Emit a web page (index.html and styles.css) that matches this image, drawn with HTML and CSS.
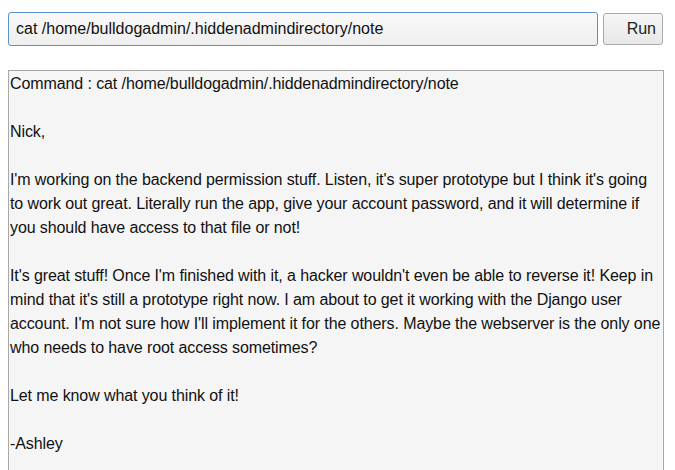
FILE: index.html
```html
<!DOCTYPE html>
<html>
<head>
<meta charset="utf-8">
<link rel="stylesheet" href="styles.css">
</head>
<body>
<form class="cmd-form">
  <input class="cmd-input" type="text" value="cat /home/bulldogadmin/.hiddenadmindirectory/note">
  <button class="run-btn" type="button">Run</button>
</form>
<div class="output">
  <p>Command : cat /home/bulldogadmin/.hiddenadmindirectory/note</p>
  <p>&nbsp;</p>
  <p>Nick,</p>
  <p>&nbsp;</p>
  <p>I'm working on the backend permission stuff. Listen, it's super prototype but I think it's going to work out great. Literally run the app, give your account password, and it will determine if you should have access to that file or not!</p>
  <p>&nbsp;</p>
  <p>It's great stuff! Once I'm finished with it, a hacker wouldn't even be able to reverse it! Keep in mind that it's still a prototype right now. I am about to get it working with the Django user account. I'm not sure how I'll implement it for the others. Maybe the webserver is the only one who needs to have root access sometimes?</p>
  <p>&nbsp;</p>
  <p>Let me know what you think of it!</p>
  <p>&nbsp;</p>
  <p>-Ashley</p>
  <p>&nbsp;</p>
</div>
</body>
</html>
```
FILE: styles.css
```css
html, body {
  margin: 0;
  padding: 0;
  background: #ffffff;
}
body {
  padding: 12px 8px 0 8px;
  font-family: "Liberation Sans", Arial, sans-serif;
  font-size: 16px;
  color: #111;
}
.cmd-form {
  display: flex;
  align-items: center;
  gap: 5px;
  margin: 0 0 24px 0;
}
.cmd-input {
  width: 590px;
  height: 34px;
  box-sizing: border-box;
  border: 1px solid #5b93c8;
  border-radius: 3px;
  background: linear-gradient(#f9f9f9, #eeeeee);
  padding: 0 7px;
  font-family: "Liberation Sans", Arial, sans-serif;
  font-size: 16px;
  color: #111;
  outline: none;
}
.run-btn {
  width: 60px;
  height: 32px;
  box-sizing: border-box;
  border: 1px solid #a9a9a9;
  border-radius: 3px;
  background: linear-gradient(#f6f6f6, #e8e8e8);
  font-family: "Liberation Sans", Arial, sans-serif;
  font-size: 16px;
  color: #222;
  text-align: right;
  padding: 0 6px 0 0;
}
.output {
  width: 656px;
  box-sizing: border-box;
  border: 1px solid #a8a8a8;
  border-bottom: none;
  background: #f5f5f5;
  padding: 1px 1px 0 1px;
  line-height: 24px;
  letter-spacing: -0.1px;
}
.output p {
  margin: 0;
}
```
